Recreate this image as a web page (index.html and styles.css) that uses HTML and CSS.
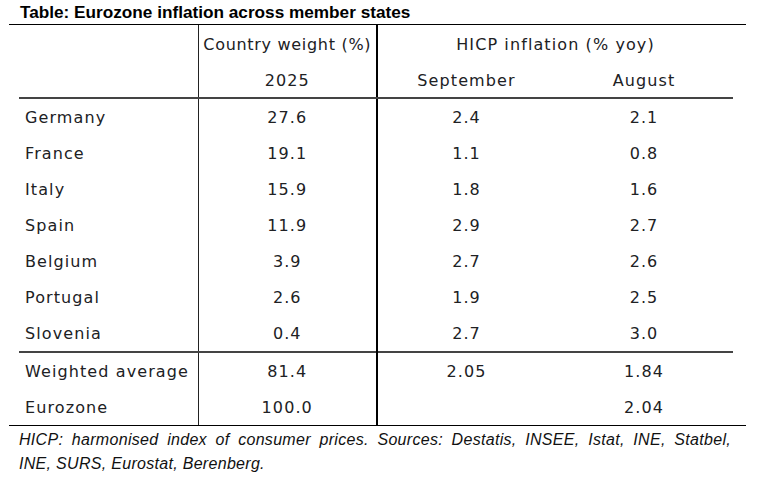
FILE: index.html
```html
<!DOCTYPE html>
<html>
<head>
<meta charset="utf-8">
<link rel="stylesheet" href="styles.css">
</head>
<body>
<div class="page">
  <div class="title">Table: Eurozone inflation across member states</div>
  <div class="frame">
    <table class="data">
      <colgroup>
        <col class="c1"><col class="c2"><col class="c3"><col class="c4">
      </colgroup>
      <thead>
        <tr class="h1">
          <th class="lab"></th>
          <th class="w">Country weight (%)</th>
          <th class="infl" colspan="2">HICP inflation (% yoy)</th>
        </tr>
        <tr class="h2">
          <th class="lab"></th>
          <th class="w">2025</th>
          <th class="infl">September</th>
          <th>August</th>
        </tr>
      </thead>
      <tbody class="countries">
        <tr><td class="lab">Germany</td><td class="w">27.6</td><td class="infl">2.4</td><td>2.1</td></tr>
        <tr><td class="lab">France</td><td class="w">19.1</td><td class="infl">1.1</td><td>0.8</td></tr>
        <tr><td class="lab">Italy</td><td class="w">15.9</td><td class="infl">1.8</td><td>1.6</td></tr>
        <tr><td class="lab">Spain</td><td class="w">11.9</td><td class="infl">2.9</td><td>2.7</td></tr>
        <tr><td class="lab">Belgium</td><td class="w">3.9</td><td class="infl">2.7</td><td>2.6</td></tr>
        <tr><td class="lab">Portugal</td><td class="w">2.6</td><td class="infl">1.9</td><td>2.5</td></tr>
        <tr><td class="lab">Slovenia</td><td class="w">0.4</td><td class="infl">2.7</td><td>3.0</td></tr>
      </tbody>
      <tbody class="totals">
        <tr class="first"><td class="lab">Weighted average</td><td class="w">81.4</td><td class="infl">2.05</td><td>1.84</td></tr>
        <tr><td class="lab">Eurozone</td><td class="w">100.0</td><td class="infl"></td><td>2.04</td></tr>
      </tbody>
    </table>
  </div>
  <p class="note"><span class="l1">HICP: harmonised index of consumer prices. Sources: Destatis, INSEE, Istat, INE, Statbel,</span> INE, SURS, Eurostat, Berenberg.</p>
</div>
</body>
</html>
```
FILE: styles.css
```css
html, body {
  margin: 0;
  padding: 0;
  background: #ffffff;
}

.page {
  width: 737px;
  margin-left: 9px;
}

.title {
  font-family: "Liberation Sans", Arial, sans-serif;
  font-weight: bold;
  font-size: 17.2px;
  line-height: 24px;
  height: 24px;
  padding-left: 11px;
  color: #000;
  border-bottom: 1px solid #000;
}

.frame {
  border-bottom: 1px solid #000;
  padding-left: 10px;
}

.data {
  border-collapse: collapse;
  table-layout: fixed;
  width: 714px;
  font-family: "DejaVu Sans", sans-serif;
  font-size: 16px;
  letter-spacing: 1.1px;
  color: #202124;
}

.c1 { width: 179px; }
.c2 { width: 179px; }
.c3 { width: 178px; }
.c4 { width: 178px; }

.data th,
.data td {
  padding: 0;
  font-weight: normal;
  text-align: center;
  white-space: nowrap;
}

.data .lab {
  text-align: left;
  padding-left: 6px;
}

.data .w {
  border-left: 1px solid #222;
  border-right: 2px solid #000;
}

.h1 th { height: 36px; padding-top: 1px; }
.h1 th.w { letter-spacing: 0.7px; }
.h2 th { height: 34px; padding-top: 1px; }

.data thead tr.h2 th {
  border-bottom: 2px solid #444;
}

.data tbody tr td { height: 36px; }

.totals tr.first td {
  border-top: 2px solid #444;
}

.note {
  margin: 0;
  padding: 2px 15px 0 10px;
  font-family: "Liberation Sans", Arial, sans-serif;
  font-style: italic;
  font-size: 16px;
  letter-spacing: 0.3px;
  line-height: 24px;
  color: #111;
}

.note .l1 {
  display: block;
  text-align: justify;
  text-align-last: justify;
}
```
